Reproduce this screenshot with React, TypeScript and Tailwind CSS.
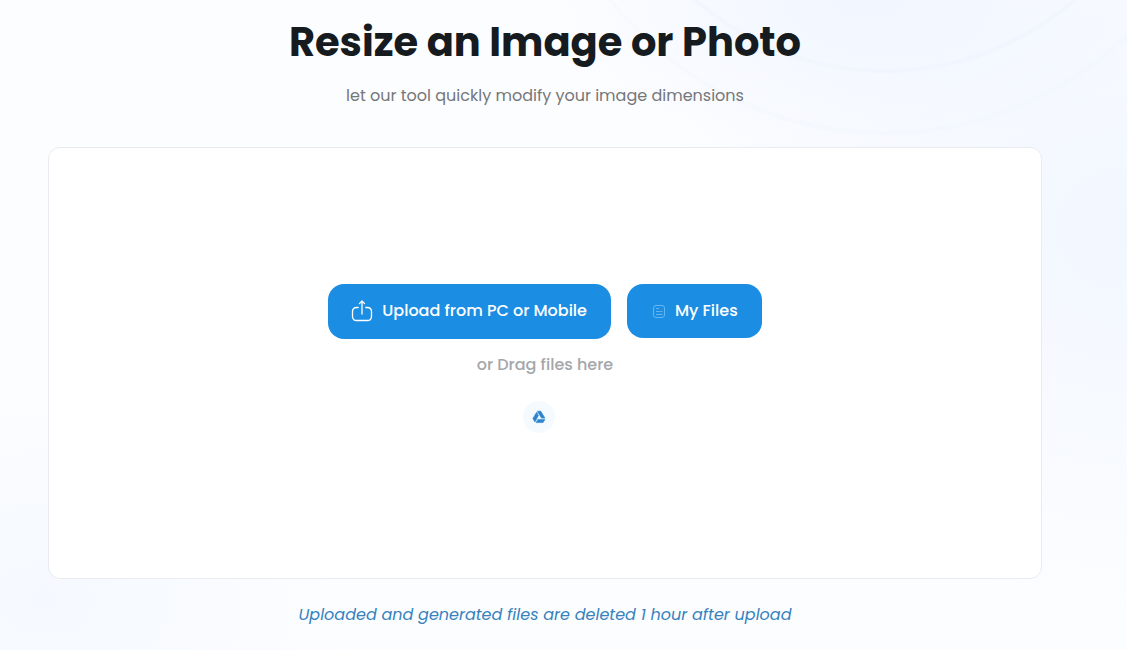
import { useRef } from "react";

function UploadIcon() {
  return (
    <svg aria-hidden="true" className="size-6 shrink-0" viewBox="0 0 24 24" fill="none" stroke="currentColor" strokeWidth="1.3" strokeLinecap="round" strokeLinejoin="round">
      <path d="M8.2 8.5H6.8C4 8.5 2.5 9.9 2.5 12.6v4.6c0 2.9 1.4 4.3 4.3 4.3h10.4c2.9 0 4.3-1.4 4.3-4.3v-4.6c0-2.7-1.5-4.1-4.3-4.1h-1.4" />
      <path d="M12 15V2M9.4 4.6L12 2l2.6 2.6" />
    </svg>
  );
}

function FileIcon() {
  return (
    <svg aria-hidden="true" className="size-4 shrink-0 text-[#66b6f1]" viewBox="0 0 16 16" fill="none" stroke="currentColor" strokeWidth="1" strokeLinecap="round" strokeLinejoin="round">
      <rect x="2.5" y="2.5" width="11" height="12" rx="2.5" />
      <path d="M5.5 5.5h2M5.5 8.5h3M9.8 8.5h1.2M5.5 11.5h5.5" />
    </svg>
  );
}

function DriveIcon() {
  return (
    <svg aria-hidden="true" className="size-4" viewBox="0 0 16 16" fill="#2e83cd" stroke="#2e83cd" strokeWidth=".6" strokeLinejoin="round">
      <path d="M6.4 2.2h3.4l4.1 6.9h-3.4L6.9 3.3z" />
      <path d="M5.6 3.3l1.8 3.3-3.5 6.4-2-3.6z" />
      <path d="M6.9 10.4h7l-1.8 3.2H5.1z" />
    </svg>
  );
}

function Rings() {
  return (
    <svg aria-hidden="true" className="pointer-events-none absolute top-0 right-0 -z-10 h-40 w-[527px]" viewBox="600 0 527 160" fill="none" stroke="#edf3f8" strokeWidth="4">
      <circle cx="885" cy="-217" r="288" strokeOpacity=".45" />
      <circle cx="885" cy="-217" r="350" strokeOpacity=".2" />
    </svg>
  );
}

const backdrop =
  "bg-[#fcfdff] bg-[radial-gradient(ellipse_340px_170px_at_77%_0%,#f1f6ff,transparent),radial-gradient(ellipse_460px_400px_at_100%_35%,#f2f7ff,transparent),radial-gradient(ellipse_320px_240px_at_4%_92%,#f5f9ff,transparent)]";

export default function App() {
  const picker = useRef<HTMLInputElement>(null);

  return (
    <main className={`relative isolate min-h-screen overflow-hidden pt-4 pr-[85px] pb-6 pl-12 text-center text-base font-normal font-[Poppins,Inter,sans-serif] ${backdrop}`}>
      <Rings />
      <h1 className="text-[40px] leading-[52px] font-bold text-[#151b1e]">Resize an Image or Photo</h1>
      <p className="mt-4 leading-6 text-[#757779]">let our tool quickly modify your image dimensions</p>

      <section aria-label="Upload files" className="mt-[39px] flex min-h-[432px] flex-col items-center justify-center rounded-xl border border-[#e8ecf0] bg-white px-6 pb-2.5">
        <div className="flex flex-wrap items-start justify-center gap-4">
          <button type="button" onClick={() => picker.current?.click()} className="flex h-[55px] items-center gap-2 rounded-2xl bg-[#1b8ee3] pr-6 pl-[22px] font-medium text-white">
            <UploadIcon />
            Upload from PC or Mobile
          </button>
          <input ref={picker} type="file" accept="image/*" multiple aria-label="Image files" className="hidden" />
          <button type="button" className="flex h-[54px] items-center gap-2 rounded-2xl bg-[#1b8ee3] px-6 font-medium text-white">
            <FileIcon />
            My Files
          </button>
        </div>
        <p className="mt-3.5 leading-6 font-medium text-[#a5a7aa]">or Drag files here</p>
        <button type="button" aria-label="Google Drive" className="mt-6 mr-3 flex size-8 items-center justify-center rounded-full bg-[#f4fafe]">
          <DriveIcon />
        </button>
      </section>

      <p className="mt-6 leading-6 text-[#3582bd] italic">Uploaded and generated files are deleted 1 hour after upload</p>
    </main>
  );
}
